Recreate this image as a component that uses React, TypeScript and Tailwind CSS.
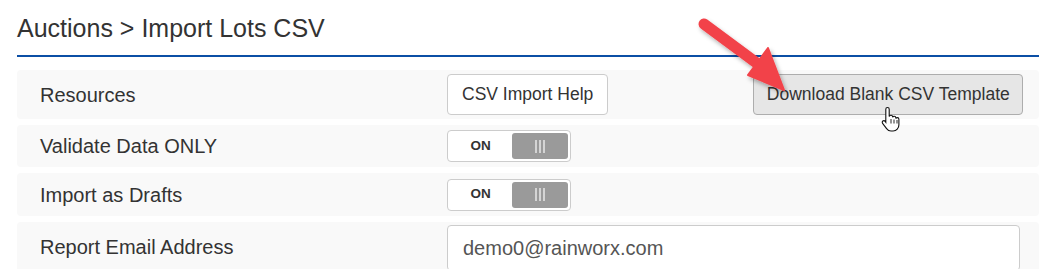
import React from "react";

const FONT = "font-['Liberation_Sans',Arial,sans-serif]";

function Toggle() {
  return (
    <div className="flex h-[32px] w-[124px] items-stretch rounded-[4px] border border-[#cccccc] bg-white p-[2px]">
      <div className="flex w-[62px] items-center justify-center pr-[1px] text-[13.5px] font-bold text-[#333333]">ON</div>
      <div className="flex flex-1 items-center justify-center gap-[2.5px] rounded-[3px] bg-[#9a9a9a]">
        <span className="h-[13px] w-[1.5px] bg-[#d4d4d4]" />
        <span className="h-[13px] w-[1.5px] bg-[#d4d4d4]" />
        <span className="h-[13px] w-[1.5px] bg-[#d4d4d4]" />
      </div>
    </div>
  );
}

function Row({ label, h, children }: { label: string; h: string; children: React.ReactNode }) {
  return (
    <div className={`flex items-center rounded-[4px] bg-[#f9f9f9] ${h}`}>
      <div className="w-[430px] shrink-0 pl-[23px] text-[20px] text-[#333333]">{label}</div>
      <div className="flex flex-1 items-center">{children}</div>
    </div>
  );
}

export default function App() {
  return (
    <div className={`relative h-[269px] w-[1039px] overflow-hidden bg-white ${FONT}`}>
      <div className="pl-[17px]">
        <div className="border-b-2 border-[#0b4fa5] pt-[16px] pb-[14px] text-[25px] leading-[25px] text-[#333333]">
          Auctions &gt; Import Lots CSV
        </div>

        <div className="mt-[13px] flex flex-col gap-[6px]">
          <Row label="Resources" h="h-[49px]">
            <button className="h-[41px] rounded-[4px] border border-[#cccccc] bg-white px-[14px] text-[17.5px] text-[#333333]">
              CSV Import Help
            </button>
            <button className="ml-[145px] h-[41px] w-[270px] rounded-[4px] border border-[#adadad] bg-[#e6e6e6] text-[17.5px] text-[#333333]">
              Download Blank CSV Template
            </button>
          </Row>
          <Row label="Validate Data ONLY" h="h-[42px]">
            <Toggle />
          </Row>
          <Row label="Import as Drafts" h="h-[43px]">
            <Toggle />
          </Row>
          <Row label="Report Email Address" h="h-[50px]">
            <div className="mt-[2px] flex h-[46px] w-[573px] items-center rounded-[4px] border border-[#cccccc] bg-white pl-[15px] text-[20px] text-[#555555]">
              demo0@rainworx.com
            </div>
          </Row>
        </div>
      </div>

      {/* annotation arrow */}
      <svg className="pointer-events-none absolute left-0 top-0" width="1039" height="269">
        <defs>
          <filter id="sh" x="-20%" y="-20%" width="140%" height="140%">
            <feDropShadow dx="2" dy="3" stdDeviation="2" floodColor="#000" floodOpacity="0.3" />
          </filter>
        </defs>
        <g filter="url(#sh)" fill="#f2434a" stroke="#f2434a">
          <line x1="704" y1="24" x2="758" y2="64" strokeWidth="11" strokeLinecap="round" />
          <polygon points="768,48 748,75 784,90" strokeWidth="2" strokeLinejoin="round" />
        </g>
      </svg>

      {/* hand cursor */}
      <svg className="pointer-events-none absolute left-[881px] top-[106px]" width="22" height="26" viewBox="0 0 22 26">
        <path
          d="M6.5 1.5c1 0 1.7.7 1.7 1.7v7.3c.3-.9 1-1.3 1.8-1.3 1 0 1.6.7 1.6 1.6v.5c.3-.7.9-1.1 1.6-1.1 1 0 1.6.7 1.6 1.6v.8c.3-.6.9-1 1.5-1 1 0 1.6.7 1.6 1.6v5.6c0 3.5-2.4 6.2-5.8 6.2H10c-2 0-3.3-.9-4.4-2.4L1.6 17.3c-.6-.8-.4-1.8.3-2.3.7-.5 1.7-.3 2.3.4l.6.9V3.2c0-1 .7-1.7 1.7-1.7z"
          fill="#fff"
          stroke="#111"
          strokeWidth="1.1"
        />
        <path d="M10 13v4.5M13 13.5v4M16 14v3.5" stroke="#111" strokeWidth="0.9" />
      </svg>
    </div>
  );
}
